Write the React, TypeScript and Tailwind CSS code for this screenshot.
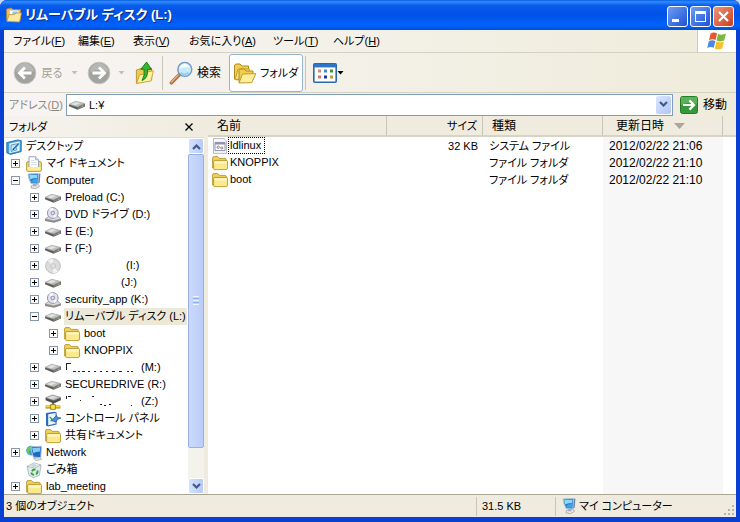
import type { ReactNode } from 'react';
import clsx from 'clsx';

type IconProps = { className?: string };

function Folder({ className = 'size-4' }: IconProps) {
  return (
    <svg className={className} viewBox="0 0 16 16" aria-hidden="true">
      <path d="M.6 13V3Q.6 1.6 2 1.6H5.6L7.2 3.4H13Q14.2 3.4 14.2 4.6V13Z" fill="#f0d260" stroke="#b8962a" strokeWidth=".9" />
      <path d="M2.8 5.4H14.2Q15.5 5.4 15.5 6.6V13Q15.5 14.6 14 14.6H2.8Q1.6 14.6 1.6 13.2V6.6Q1.6 5.4 2.8 5.4Z" fill="#fbe98e" stroke="#b8962a" strokeWidth=".9" />
      <path d="M2.6 6.5H14.5V8.5H2.6Z" fill="#fff8c8" />
    </svg>
  );
}

function Drive({ className = 'size-4' }: IconProps) {
  return (
    <svg className={className} viewBox="0 0 16 16" aria-hidden="true">
      <path d="M0 7.5V9.3L8.5 12.8L16 9.5V7Z" fill="#5c5c5c" />
      <path d="M0 7.3L6.8 4.3L16 6.6L8.5 10Z" fill="#bfbfbf" stroke="#999" strokeWidth=".6" />
      <path d="M2 7.1L7 5L11.4 6L6 8.4Z" fill="#e2e2e2" />
      <path d="M8.5 10.4V12.2L15.5 9.2V7.3Z" fill="#808080" />
      <path d="M13 9.2L14.5 8.5V9.2L13 9.9Z" fill="#8fe070" />
    </svg>
  );
}

function Disc({ className = 'size-4' }: IconProps) {
  return (
    <svg className={className} viewBox="0 0 16 16" aria-hidden="true">
      <circle cx="8" cy="8" r="7.4" fill="#dcdcdc" stroke="#b5b5b5" strokeWidth=".8" />
      <path d="M8 8L3 2.5A7.4 7.4 0 0 1 8 .8ZM8 8L13 13.5A7.4 7.4 0 0 1 8 15.2Z" fill="#f2f2f2" />
      <circle cx="8" cy="8" r="2.4" fill="#eee" stroke="#b0b0b0" strokeWidth=".7" />
      <circle cx="8" cy="8" r=".9" fill="#fff" stroke="#aaa" strokeWidth=".4" />
    </svg>
  );
}

function DiscDrive({ className = 'size-4' }: IconProps) {
  return (
    <svg className={className} viewBox="0 0 16 16" aria-hidden="true">
      <path d="M0 12L4 9H13L16 12V13.4L9 15.8L0 14Z" fill="#8a8a8a" />
      <path d="M.3 11.8L4 9.3H13L15.7 11.8L8.6 13.8Z" fill="#dadada" stroke="#999" strokeWidth=".5" />
      <circle cx="7.8" cy="6" r="5.4" fill="#e2e2ec" stroke="#9090a0" strokeWidth=".9" />
      <path d="M7.8 6L4 2.2A5.4 5.4 0 0 1 8 .9ZM7.8 6L12 9.3A5.4 5.4 0 0 1 9 11Z" fill="#fafaff" />
      <circle cx="7.8" cy="6" r="1.9" fill="#c0c0ea" stroke="#77779c" strokeWidth=".6" />
      <circle cx="7.8" cy="6" r=".7" fill="#fff" />
    </svg>
  );
}

function NetworkDrive({ className = 'size-4' }: IconProps) {
  return (
    <svg className={className} viewBox="0 0 16 16" aria-hidden="true">
      <path d="M.6 4V6.2L8.8 9.6L15.8 6.2V3.6Z" fill="#4c4c4c" />
      <path d="M.6 3.8L7.4 1L15.8 3.4L8.8 6.6Z" fill="#bfbfbf" stroke="#777" strokeWidth=".6" />
      <path d="M2.6 3.8L7.4 1.8L11.6 3L6.6 5.2Z" fill="#dedede" />
      <path d="M8 9V11" stroke="#8b7410" strokeWidth="2" />
      <path d="M.6 13H15.4" stroke="#9b8418" strokeWidth="3" />
      <path d="M.6 12.7H15.4" stroke="#f5dc3c" strokeWidth="1.5" />
      <path d="M5.6 10.6H10.4V15.4H5.6Z" fill="#f8e34a" stroke="#8b7410" strokeWidth=".8" />
    </svg>
  );
}

function Desktop({ className = 'size-4' }: IconProps) {
  return (
    <svg className={className} viewBox="0 0 16 16" aria-hidden="true">
      <path d="M.8 3.6L11.5 1L15.2 1.6V12.6L4.4 15.4L.8 13.8Z" fill="#3aa2dc" stroke="#1d6ca8" strokeWidth=".9" />
      <path d="M3.4 4.4L13.6 2.2V11.8L3.4 14.2Z" fill="#e9f7ff" />
      <path d="M5 6L10.6 4.8V11L5 12.4Z" fill="#c6e6f6" stroke="#3f86b4" strokeWidth=".8" />
      <path d="M6.6 9.6L12 3.6L14 4.8L8.8 10.6L6.4 11.2Z" fill="#2c7ac0" stroke="#fff" strokeWidth=".5" />
      <path d="M6.4 11.2L7 9.6L8.4 10.8Z" fill="#123f7a" />
    </svg>
  );
}

function Documents({ className = 'size-4' }: IconProps) {
  return (
    <svg className={className} viewBox="0 0 16 16" aria-hidden="true">
      <path d="M.6 14V7Q.6 5.6 2 5.6H14Q15.4 5.6 15.4 7V14Q15.4 15.4 14 15.4H2Q.6 15.4.6 14Z" fill="#f6da6a" stroke="#b8962a" strokeWidth=".9" />
      <path d="M3 12.5V.8H9.6L12.6 3.8V12.5Z" fill="#fff" stroke="#8a97ae" strokeWidth=".9" />
      <path d="M9.6.8V3.8H12.6" fill="#dbe6fa" stroke="#8a97ae" strokeWidth=".7" />
      <path d="M4.8 4.5H8.4M4.8 6.5H10.8M4.8 8.5H10.8" stroke="#ccd8ea" strokeWidth=".8" />
      <path d="M1.4 11H14.6V14.5H1.4Z" fill="#fcec9c" />
    </svg>
  );
}

function Computer({ className = 'size-4' }: IconProps) {
  return (
    <svg className={className} viewBox="0 0 16 16" aria-hidden="true">
      <path d="M5.5 12.4L11 10.5L13.6 13L9.8 15.8L5 14.8Z" fill="#e8e8e8" stroke="#949494" strokeWidth=".7" />
      <path d="M11.4 1L14.4.6L13.8 9.6L10.8 11.6Z" fill="#6b86a4" />
      <path d="M2 1L12.6.6L11.8 11L5 10.4Q2.6 6 2 1Z" fill="#2c7ccb" stroke="#a9c5dc" strokeWidth="1" />
      <path d="M3.2 2H11.4L11.1 5Q7 5 4 6.4Z" fill="#8cd8f8" />
      <path d="M5 8.6Q7 6 11 5.6V9.8L6 9.6Z" fill="#3ba3ea" />
      <path d="M7.5 11.1L10.5 11.4V13.3H7.2Z" fill="#a4a4b8" />
    </svg>
  );
}

function NetworkPlaces({ className = 'size-4' }: IconProps) {
  return (
    <svg className={className} viewBox="0 0 16 16" aria-hidden="true">
      <circle cx="5" cy="5.6" r="4.8" fill="#3f9bd6" />
      <path d="M.6 4Q2.4.6 5.6 1.4Q6 4 3.8 5.4T5 10Q1.6 9.6.4 6Z" fill="#6fc462" />
      <path d="M7.6 13.6L14 12.4L15.6 14.4L10 15.8Z" fill="#e2e2e2" stroke="#888" strokeWidth=".5" />
      <path d="M5 1.8L15.4 1.2L14.8 12.6L7.4 12.2Q5.4 7 5 1.8Z" fill="#2068c0" stroke="#a6c5dc" strokeWidth="1" />
      <path d="M6.2 3L14.2 2.6L13.9 6.5Q10 6.6 7.3 8Z" fill="#80cef7" />
    </svg>
  );
}

function RecycleBin({ className = 'size-4' }: IconProps) {
  return (
    <svg className={className} viewBox="0 0 16 16" aria-hidden="true">
      <path d="M1.2 4.4L15 3L13.4 13.4L7.4 15.6L3 13.4Z" fill="#e2ecee" stroke="#a0b0b6" strokeWidth=".8" />
      <path d="M1.2 4.4L8 .8L15 3L8.6 6Z" fill="#fff" stroke="#a0b0b6" strokeWidth=".8" />
      <path d="M4 4L7 2L10 2.4L12 3.4L8 5Z" fill="#c4d2d6" />
      <path d="M6 9.4Q7 7 9.6 7.6M11.4 8.6Q12.2 11.2 9.8 12.2M8 12.8Q5.4 12.6 5.4 10.6" stroke="#35a331" strokeWidth="1.8" fill="none" />
    </svg>
  );
}

function ControlPanel({ className = 'size-4' }: IconProps) {
  return (
    <svg className={className} viewBox="0 0 16 16" aria-hidden="true">
      <path d="M1 2L9.6.8L11.6 1.6V13.6L3 15.6L1 14.6Z" fill="#2d6bc0" />
      <path d="M3.2 3.2L10.6 2V12.6L3.2 14.2Z" fill="#eaf5fe" />
      <path d="M4.6 6L7 8L5.8 10.6" stroke="#3da44a" strokeWidth="1.3" fill="none" />
      <path d="M6.8 9.6L11.4 4.4L12.2 6.2L15.8 7L12.4 8.6L10.8 11Z" fill="#4a8fdd" stroke="#1e4c97" strokeWidth=".7" />
    </svg>
  );
}

function SystemFile({ className = 'size-4' }: IconProps) {
  return (
    <svg className={className} viewBox="0 0 16 16" aria-hidden="true">
      <path d="M1.5.6H12L14.5 3V15.4H1.5Z" fill="#fafafc" stroke="#b0b0bc" strokeWidth=".9" />
      <path d="M3 4.4H13V12.6H3Z" fill="#fff" stroke="#8585a2" strokeWidth=".9" />
      <path d="M3 4.4H13V6.4H3Z" fill="#8f8fb4" />
      <circle cx="6.2" cy="9.2" r="1.2" fill="none" stroke="#777792" strokeWidth=".9" />
      <circle cx="9.8" cy="10" r="1.1" fill="none" stroke="#777792" strokeWidth=".9" />
    </svg>
  );
}

function OpenFolder({ className = 'size-4' }: IconProps) {
  return (
    <svg className={className} viewBox="0 0 16 16" aria-hidden="true">
      <path d="M.6 13V2L5.4 1L7 2.8L14.4 2.4V13Z" fill="#eebf5c" stroke="#b9852a" strokeWidth=".8" />
      <path d="M3.4 3.2H11.4L13.4 5V12H3.4Z" fill="#fff" stroke="#9ab7d8" strokeWidth=".6" />
      <path d="M6.4 4.6H11.6V8.6H6.4Z" fill="#8ccaf0" />
      <path d="M.8 14.4L3 7.6L9 7.2L10 6H15.5L13.5 15Z" fill="#fbe9a2" stroke="#c09636" strokeWidth=".8" />
    </svg>
  );
}

function RoundArrow({ flip = false }: { flip?: boolean }) {
  return (
    <svg className={clsx('size-6', flip && '-scale-x-100')} viewBox="0 0 24 24" aria-hidden="true">
      <circle cx="12" cy="12" r="10.8" fill="#a2a29f" stroke="#c4c4bf" />
      <path d="M3 11A9 9 0 0 1 21 11Q12 7 3 11Z" fill="#b6b6b3" />
      <path d="M18.5 12H7M12 6.4L6.4 12L12 17.6" stroke="#fff" strokeWidth="2.8" fill="none" />
    </svg>
  );
}

function UpFolder() {
  return (
    <svg className="h-6 w-5" viewBox="0 0 20 24" aria-hidden="true">
      <path d="M1.4 22.4V9L6 7.6L8 9.4L16.6 7V19Z" fill="#eccb50" stroke="#b5902a" strokeWidth=".9" />
      <path d="M1.6 22.4L4.6 13.8L10.6 12.8L11.6 11L18.4 9.8L16 20Z" fill="#fdf0a0" stroke="#c5a237" strokeWidth=".9" />
      <path d="M7 19.6Q13.4 17 12.6 8.4H16.4L11.6 1L5.8 8.2H9.2Q10 14.4 7 19.6Z" fill="#38b432" stroke="#137516" strokeWidth=".9" />
    </svg>
  );
}

function Magnifier() {
  return (
    <svg className="size-6" viewBox="0 0 24 24" aria-hidden="true">
      <path d="M10 14L2.4 21.8" stroke="#a9704a" strokeWidth="3.6" strokeLinecap="round" />
      <path d="M9.2 14L2.2 21.2" stroke="#eab07a" strokeWidth="1.4" strokeLinecap="round" />
      <circle cx="15.8" cy="8.4" r="7" fill="#c6e9fc" stroke="#7396c4" strokeWidth="1.4" />
      <path d="M10.4 8Q11 3 16 2.8Q20 3.2 20.8 6.6Q15 5.4 10.4 8Z" fill="#f2fcff" />
      <path d="M11.5 11.7Q15 14.6 19.5 11.7" stroke="#8acdf2" strokeWidth="1.5" fill="none" />
    </svg>
  );
}

function Folders() {
  return (
    <svg className="h-6 w-6" viewBox="0 0 24 24" aria-hidden="true">
      <path d="M1.5 18V4L3 3H7L9 5H15.5V15L4 19Z" fill="#f2cd50" stroke="#b18a1d" />
      <path d="M2 18.6L5 8H16.5L14 17Z" fill="#fbe680" stroke="#c59e2e" />
      <path d="M6 21.5V9.5L7.2 8H11.5L13 10H20V19Z" fill="#f2cd50" stroke="#b18a1d" />
      <path d="M6 22L9.5 13L22.8 12.6L18.8 21.6Z" fill="#ffef9c" stroke="#c09a2a" />
    </svg>
  );
}

function Views() {
  return (
    <svg className="h-5 w-6" viewBox="0 0 24 20" aria-hidden="true">
      <rect x=".8" y=".8" width="22.4" height="18.4" rx="1" fill="#fff" stroke="#2a67b0" strokeWidth="1.6" />
      <path d="M1 1H23V4.4H1Z" fill="#2f74c4" />
      <path d="M5 6.5H8V9.5H5Z" fill="#d78878" />
      <path d="M11 6.5H14V9.5H11Z" fill="#4a86cf" />
      <path d="M17 6.5H20V9.5H17Z" fill="#37973a" />
      <path d="M5 12.5H8V15.5H5Z" fill="#cf7f70" />
      <path d="M11 12.5H14V15.5H11Z" fill="#17398c" />
      <path d="M17 12.5H20V15.5H17Z" fill="#b59b3c" />
    </svg>
  );
}

function WindowsFlag() {
  return (
    <svg className="h-5 w-5" viewBox="0 0 20 20" aria-hidden="true">
      <path d="M3.6 2.6Q6.6.4 10 2.2L8.6 9Q5.4 7.2 2 9.2Z" fill="#e8562a" />
      <path d="M11 2.8Q14.6 4.6 19 2.6L17.2 9.6Q13.4 11.2 9.6 9.5Z" fill="#7db83c" />
      <path d="M1.8 10.2Q5 8.4 8.4 10L6.8 16.8Q3.6 15 .2 17Z" fill="#4a8be0" />
      <path d="M9.4 10.6Q13.2 12.2 17 10.6L15.2 17.4Q11.4 19.2 7.8 17.4Z" fill="#f8c02c" />
    </svg>
  );
}

function Caret({ className }: IconProps) {
  return (
    <svg className={clsx('h-[4px] w-[7px]', className)} viewBox="0 0 7 4" aria-hidden="true">
      <path d="M.5 0H6.5L3.5 3.5Z" fill="currentColor" />
    </svg>
  );
}

function Chevron({ up = false }: { up?: boolean }) {
  return (
    <svg className={clsx('h-[7px] w-[9px]', up && 'rotate-180')} viewBox="0 0 9 7" aria-hidden="true">
      <path d="M1 1L4.5 4.5L8 1" stroke="#3f5a86" strokeWidth="2.2" fill="none" />
    </svg>
  );
}

// leftovers of a volume label that has been painted over
function Smudge({ d }: { d: string }) {
  return (
    <svg className="h-[17px] w-[72px]" viewBox="0 0 72 17" aria-hidden="true">
      <path d={d} stroke="#222" fill="none" />
    </svg>
  );
}

const menus = [
  { label: 'ファイル', key: 'F', width: 'w-[65px]' },
  { label: '編集', key: 'E', width: 'w-[55px]' },
  { label: '表示', key: 'V', width: 'w-[56px]' },
  { label: 'お気に入り', key: 'A', width: 'w-[84px]' },
  { label: 'ツール', key: 'T', width: 'w-[60px]' },
  { label: 'ヘルプ', key: 'H', width: 'w-[60px]' },
];

type Node = {
  label: ReactNode;
  level: number;
  icon: (p: IconProps) => ReactNode;
  state?: 'open' | 'closed';
  selected?: boolean;
};

const tree: Node[] = [
  { label: 'デスクトップ', level: 0, icon: Desktop },
  { label: 'マイ ドキュメント', level: 1, icon: Documents, state: 'closed' },
  { label: 'Computer', level: 1, icon: Computer, state: 'open' },
  { label: 'Preload (C:)', level: 2, icon: Drive, state: 'closed' },
  { label: 'DVD ドライブ (D:)', level: 2, icon: DiscDrive, state: 'closed' },
  { label: 'E (E:)', level: 2, icon: Drive, state: 'closed' },
  { label: 'F (F:)', level: 2, icon: Drive, state: 'closed' },
  { label: <span className="pl-[61px]">(I:)</span>, level: 2, icon: Disc, state: 'closed' },
  { label: <span className="pl-[56px]">(J:)</span>, level: 2, icon: Drive, state: 'closed' },
  { label: 'security_app (K:)', level: 2, icon: DiscDrive, state: 'closed' },
  { label: 'リムーバブル ディスク (L:)', level: 2, icon: Drive, state: 'open', selected: true },
  { label: 'boot', level: 3, icon: Folder, state: 'closed' },
  { label: 'KNOPPIX', level: 3, icon: Folder, state: 'closed' },
  {
    label: (
      <>
        <Smudge d="M1.5 4V11M1 4.5H6M8 12.5H11M13 12.5H15M17 12.5H20M23 12.5H25M29 12.5H31M35 12.5H37M41 12.5H43M47 12.5H50M54 12.5H57M62 12.5H64M66 12.5H68" />
        <span className="pl-1">(M:)</span>
      </>
    ),
    level: 2,
    icon: Drive,
    state: 'closed',
  },
  { label: 'SECUREDRIVE (R:)', level: 2, icon: Drive, state: 'closed' },
  {
    label: (
      <>
        <Smudge d="M1.5 3V6M3 3.5H6M27 3.5H29M15 7.5H16M35 11.5H37M39 12.5H41M44 11.5H46M66 12.5H67" />
        <span className="pl-1">(Z:)</span>
      </>
    ),
    level: 2,
    icon: NetworkDrive,
    state: 'closed',
  },
  { label: 'コントロール パネル', level: 2, icon: ControlPanel, state: 'closed' },
  { label: '共有ドキュメント', level: 2, icon: Folder, state: 'closed' },
  { label: 'Network', level: 1, icon: NetworkPlaces, state: 'closed' },
  { label: 'ごみ箱', level: 1, icon: RecycleBin },
  { label: 'lab_meeting', level: 1, icon: Folder, state: 'closed' },
];

const indents = ['pl-[2px]', 'pl-[7px]', 'pl-[26px]', 'pl-[45px]'];

const files = [
  { name: 'ldlinux', size: '32 KB', type: 'システム ファイル', date: '2012/02/22 21:06', icon: SystemFile, focused: true },
  { name: 'KNOPPIX', size: '', type: 'ファイル フォルダ', date: '2012/02/22 21:10', icon: Folder },
  { name: 'boot', size: '', type: 'ファイル フォルダ', date: '2012/02/22 21:10', icon: Folder },
];

function TitleBar() {
  const button = 'flex size-[21px] items-center justify-center rounded-[3px] border border-white';
  return (
    <header className="flex h-[30px] shrink-0 items-center bg-[linear-gradient(#0a5fe0_0%,#2f8cff_6%,#0a5cec_18%,#0052e4_45%,#0062fc_85%,#0050d8_100%)] pr-[6px] pl-[6px]">
      <OpenFolder />
      <h1 className="flex-1 truncate pl-[3px] text-[13px] leading-[20px] font-bold text-white [text-shadow:1px_1px_#0a2a86]">リムーバブル ディスク (L:)</h1>
      <div className="flex gap-[2px] pt-[2px]">
        <button aria-label="最小化" className={clsx(button, 'bg-linear-to-br from-[#6f9cf5] to-[#1e4fd6]')}>
          <span className="mt-2 mr-[5px] h-[3px] w-[7px] bg-white" />
        </button>
        <button aria-label="最大化" className={clsx(button, 'bg-linear-to-br from-[#6f9cf5] to-[#1e4fd6]')}>
          <span className="h-[11px] w-[11px] border border-t-[3px] border-white" />
        </button>
        <button aria-label="閉じる" className={clsx(button, 'bg-linear-to-br from-[#ee9478] to-[#c93a12]')}>
          <svg className="size-[13px]" viewBox="0 0 13 13" aria-hidden="true">
            <path d="M2 2L11 11M11 2L2 11" stroke="#fff" strokeWidth="2.2" />
          </svg>
        </button>
      </div>
    </header>
  );
}

function MenuBar() {
  return (
    <nav className="flex h-[23px] shrink-0 border-b border-[#d5d1c3]">
      <div className="flex flex-1 pl-[9px] text-[11px]">
        {menus.map(m => (
          <button key={m.key} className={clsx('text-left whitespace-nowrap', m.width)}>
            {m.label}(<u>{m.key}</u>)
          </button>
        ))}
      </div>
      <div className="flex w-[39px] items-center justify-center border-l border-[#d0ccbc] bg-white">
        <WindowsFlag />
      </div>
    </nav>
  );
}

function Toolbar() {
  return (
    <div className="flex h-[40px] shrink-0 items-center border-b border-[#d5d1c3] pl-[9px]">
      <button className="flex items-center gap-1 text-[11px] text-[#a5a294]" disabled>
        <RoundArrow />
        <span className="w-[22px] whitespace-nowrap">戻る</span>
      </button>
      <Caret className="ml-2 text-[#c4c0b0]" />
      <button className="ml-[9px]" aria-label="進む" disabled>
        <RoundArrow flip />
      </button>
      <Caret className="ml-[7px] text-[#c4c0b0]" />
      <button className="ml-[10px]" aria-label="上へ">
        <UpFolder />
      </button>
      <span className="ml-[7px] h-[34px] w-px bg-[#c9c5b5]" />
      <button className="ml-[6px] flex items-center gap-1">
        <Magnifier />
        <span>検索</span>
      </button>
      <button className="ml-2 flex h-[38px] w-[74px] items-center gap-[3px] rounded-[3px] border border-[#98b5cf] bg-white pl-[3px] text-[11px] whitespace-nowrap">
        <Folders />
        <span>フォルダ</span>
      </button>
      <span className="ml-[2px] h-[34px] w-px bg-[#c9c5b5]" />
      <button className="ml-[7px] flex items-center" aria-label="表示">
        <Views />
        <Caret />
      </button>
    </div>
  );
}

function AddressBar() {
  return (
    <form className="flex h-[23px] shrink-0 items-center pr-[9px]">
      <label htmlFor="address" className="w-[62px] pl-[5px] text-[11px] whitespace-nowrap text-[#8d8a7d]">
        アドレス(<u>D</u>)
      </label>
      <div className="relative h-[22px] flex-1 border border-[#7f9db9] bg-white">
        <select id="address" className="h-full w-full appearance-none pl-[22px] text-[11px] outline-none">
          <option>L:¥</option>
        </select>
        <Drive className="pointer-events-none absolute top-[2px] left-[2px] size-4" />
        <span className="pointer-events-none absolute top-px right-px bottom-px flex w-[15px] items-center justify-center rounded-[2px] bg-linear-to-br from-[#dbe5fd] to-[#b1c6f7]">
          <Chevron />
        </span>
      </div>
      <button type="button" className="ml-[7px] flex items-center gap-[5px]">
        <svg className="size-[18px]" viewBox="0 0 18 18" aria-hidden="true">
          <rect x=".5" y=".5" width="17" height="17" rx="2" fill="#35983a" stroke="#227a2b" />
          <path d="M1 1H17V8Q9 5 1 9Z" fill="#58b257" />
          <path d="M3 9H14M9.4 4.4L14 9L9.4 13.6" stroke="#fff" strokeWidth="2.2" fill="none" />
        </svg>
        <span>移動</span>
      </button>
    </form>
  );
}

function Expander({ state }: { state?: 'open' | 'closed' }) {
  if (!state) return <span className="w-[9px] shrink-0" />;
  return (
    <button aria-label={state === 'open' ? '折りたたむ' : '展開'} className="size-[9px] shrink-0">
      <svg viewBox="0 0 9 9" className="size-[9px]" aria-hidden="true">
        <rect x=".5" y=".5" width="8" height="8" fill="#fcfbf8" stroke="#8696ae" />
        <path d={state === 'open' ? 'M2 4.5H7' : 'M2 4.5H7M4.5 2V7'} stroke="#000" />
      </svg>
    </button>
  );
}

function FolderPane() {
  const arrow = 'flex h-[16px] w-full shrink-0 items-center justify-center rounded-[2px] border border-white bg-linear-to-r from-[#d5e1fd] to-[#b7cbf8]';
  return (
    <aside className="flex w-[200px] shrink-0 flex-col bg-white text-[11px]">
      <div className="flex h-[22px] shrink-0 items-center justify-between border-b border-[#e2dfd2] bg-linear-to-r from-[#f6f3ef] to-[#efecdf] pr-[11px] pl-[5px]">
        <h2>フォルダ</h2>
        <button aria-label="閉じる">
          <svg className="size-2" viewBox="0 0 8 8" aria-hidden="true">
            <path d="M.5.5L7.5 7.5M7.5.5L.5 7.5" stroke="#000" strokeWidth="1.3" />
          </svg>
        </button>
      </div>
      <div className="flex min-h-0 flex-1">
        <ul className="min-w-0 flex-1 overflow-hidden">
          {tree.map((node, i) => (
            <li key={i} className={clsx('flex h-[17px] items-center whitespace-nowrap', indents[node.level])}>
              {node.level > 0 && <Expander state={node.state} />}
              <span className={clsx('shrink-0', node.level > 0 && 'ml-[6px]')}>
                <node.icon />
              </span>
              <span className={clsx('ml-[3px] flex items-center px-px leading-[17px]', node.selected && 'bg-[#ece9d8]')}>{node.label}</span>
            </li>
          ))}
        </ul>
        <div className="flex w-[16px] shrink-0 flex-col bg-[#f3f3ec]">
          <button aria-label="上へスクロール" className={arrow}>
            <Chevron up />
          </button>
          <div className="flex flex-[29] flex-col items-center justify-center gap-px rounded-[2px] border border-[#98b0e6] bg-linear-to-r from-[#cbdafd] to-[#bacdf9]">
            <span className="h-px w-[6px] bg-[#eef4fe]" />
            <span className="h-px w-[6px] bg-[#8cb0f8]" />
            <span className="h-px w-[6px] bg-[#eef4fe]" />
            <span className="h-px w-[6px] bg-[#8cb0f8]" />
            <span className="h-px w-[6px] bg-[#eef4fe]" />
          </div>
          <div className="flex-[3]" />
          <button aria-label="下へスクロール" className={arrow}>
            <Chevron />
          </button>
        </div>
      </div>
    </aside>
  );
}

function FileList() {
  const head = 'border-r border-b-2 border-r-[#cbc7b8] border-b-[#d8d4c4] p-0 font-normal';
  return (
    <main className="ml-1 min-w-0 flex-1 bg-white">
      <table className="h-full w-full table-fixed border-separate border-spacing-0 whitespace-nowrap">
        <thead>
          <tr className="h-[21px] bg-[#efecdf]">
            <th className={clsx(head, 'w-[179px] pl-[9px] text-left')}>名前</th>
            <th className={clsx(head, 'w-[96px] pr-[5px] text-right text-[11px]')}>サイズ</th>
            <th className={clsx(head, 'w-[120px] pl-[9px] text-left')}>種類</th>
            <th className={clsx(head, 'w-[120px] pl-[13px] text-left')}>
              <span className="flex items-center gap-[10px]">
                更新日時
                <svg className="h-[6px] w-[11px]" viewBox="0 0 11 6" aria-hidden="true">
                  <path d="M0 0H11L5.5 6Z" fill="#aca899" />
                </svg>
              </span>
            </th>
            <td className="border-b-2 border-b-[#d8d4c4] p-0" />
          </tr>
        </thead>
        <tbody>
          {files.map(f => (
            <tr key={f.name} className="h-[17px]">
              <td className="p-0 pl-[4px]">
                <span className="flex items-center">
                  <f.icon />
                  <span className={clsx('border border-dotted pr-[3px] pl-px text-[11px] leading-[15px]', f.focused ? 'border-black' : 'border-transparent')}>{f.name}</span>
                </span>
              </td>
              <td className="p-0 pr-[5px] text-right text-[11px]">{f.size}</td>
              <td className="p-0 pl-[6px] text-[11px]">{f.type}</td>
              <td className="bg-[#f7f7f7] p-0 pl-[6px]">{f.date}</td>
              <td className="p-0" />
            </tr>
          ))}
          <tr className="h-full">
            <td className="p-0" colSpan={3} />
            <td className="bg-[#f7f7f7] p-0" />
            <td className="p-0" />
          </tr>
        </tbody>
      </table>
    </main>
  );
}

function StatusBar() {
  return (
    <footer className="flex h-[23px] shrink-0 items-center border-t border-[#aaa797] bg-[#efecdf] text-[11px]">
      <span className="flex-1 pl-[2px]">3 個のオブジェクト</span>
      <span className="flex h-[19px] w-[79px] items-center border-l border-[#c9c5b5] pl-[5px]">31.5 KB</span>
      <span className="flex h-[19px] w-[168px] items-center gap-[2px] border-l border-[#c9c5b5] pl-[5px]">
        <Computer />
        マイ コンピューター
      </span>
      <svg className="mt-2 mr-px size-[12px]" viewBox="0 0 12 12" aria-hidden="true">
        <path d="M9 1H11V3H9ZM9 5H11V7H9ZM9 9H11V11H9ZM5 5H7V7H5ZM5 9H7V11H5ZM1 9H3V11H1Z" fill="#b8b4a2" />
      </svg>
    </footer>
  );
}

export default function App() {
  return (
    <div className="h-screen bg-[#c8d8f4] font-['Liberation_Sans','Noto_Sans_CJK_JP',sans-serif] text-[12px] leading-[16px] text-black [font-feature-settings:'palt']">
      <div className="flex h-full flex-col overflow-hidden rounded-t-[7px] bg-[#0a3fd4]">
        <TitleBar />
        <div className="mx-1 mb-[5px] flex min-h-0 flex-1 flex-col bg-linear-to-r from-[#f7f4f3] to-[#efecdb]">
          <MenuBar />
          <Toolbar />
          <AddressBar />
          <div className="flex min-h-0 flex-1 bg-[#efecdf]">
            <FolderPane />
            <FileList />
          </div>
          <StatusBar />
        </div>
      </div>
    </div>
  );
}
